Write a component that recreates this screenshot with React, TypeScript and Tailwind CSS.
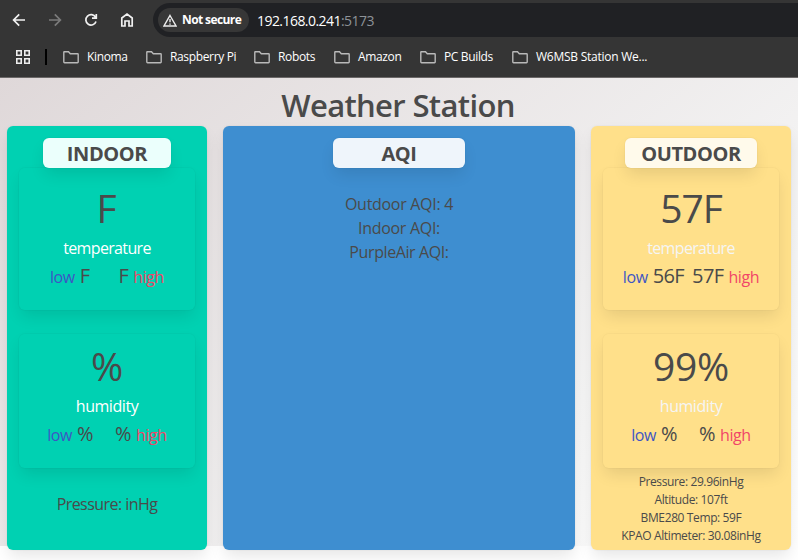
import type { ReactNode } from 'react';

const boxShadow = 'shadow-[0_8px_16px_-2px_rgba(10,10,10,0.1),0_0_0_1px_rgba(10,10,10,0.02)]';

function Folder() {
  return (
    <svg width="16" height="13" viewBox="0 0 16 13" fill="none" stroke="#b9b9b9" strokeWidth="1.4" className="shrink-0">
      <path d="M.8 10.8V1.2Q.8.8 1.2.8H5.5L7.3 2.8H14.6Q15.2 2.8 15.2 3.4V11Q15.2 11.7 14.5 11.7H1.5Q.8 11.7.8 10.8Z" />
    </svg>
  );
}

function Bookmark({ label, box, text }: { label: string; box: string; text: string }) {
  return (
    <div className={`flex items-center gap-2 whitespace-nowrap ${box}`}>
      <Folder />
      <span className={`text-[12px] leading-4 text-white ${text}`}>{label}</span>
    </div>
  );
}

function Browser() {
  return (
    <header className="h-[78px] border-b border-[#6b6868] bg-[#353535]">
      <div className="flex h-10 items-center">
        <svg width="153" height="34" viewBox="0 3 153 34" fill="none" stroke="#f1f1f1" strokeWidth="1.7">
          <path d="M25 20H14M19.2 14.3L13.6 20L19.2 25.7" />
          <path stroke="#7b7b7b" d="M49 20H60M54.8 14.3L60.4 20L54.8 25.7" />
          <path d="M95.6 17.3A5.2 5.2 0 1 0 96 21.5M96.3 14V18.2H92" />
          <path d="M121.8 26V18L127 14L132.2 18V26H129V21H125V26Z" />
        </svg>
        <div className="flex h-[34px] flex-1 items-center rounded-l-full bg-[#202124] pl-[5px]">
          <div className="flex h-6 w-[91px] items-center gap-[5px] rounded-full bg-[#373737] pl-[5px]">
            <svg width="14" height="13" viewBox="0 0 14 13" fill="none" stroke="#ededed" strokeWidth="1.4">
              <path d="M7 1.5L13 12H1Z" />
              <path d="M7 5V8.3M7 9.4V10.7" />
            </svg>
            <span className="whitespace-nowrap text-[12px] font-bold tracking-[-0.6px] text-white">Not secure</span>
          </div>
          <span className="ml-2 text-[14px] tracking-[-0.55px] text-white">
            192.168.0.241<span className="text-[#8d9297]">:5173</span>
          </span>
        </div>
      </div>
      <div className="flex h-[34px] items-center pl-4">
        <svg width="14" height="14" viewBox="0 0 14 14" fill="none" stroke="#ededed" strokeWidth="1.6">
          <path d="M.8.8H5.2V5.2H.8ZM8.8.8H13.2V5.2H8.8ZM.8 8.8H5.2V13.2H.8ZM8.8 8.8H13.2V13.2H8.8Z" />
        </svg>
        <i className="ml-[15px] h-4 w-[2px] bg-black" />
        <div className="ml-4 flex">
          <Bookmark label="Kinoma" box="w-[83px]" text="tracking-[-0.35px]" />
          <Bookmark label="Raspberry Pi" box="w-[108px]" text="tracking-[-0.35px]" />
          <Bookmark label="Robots" box="w-[80px]" text="tracking-[-0.35px]" />
          <Bookmark label="Amazon" box="w-[86px]" text="tracking-[-0.35px]" />
          <Bookmark label="PC Builds" box="w-[92px]" text="tracking-[-0.35px]" />
          <Bookmark label="W6MSB Station We..." box="w-[140px]" text="tracking-[-0.25px]" />
        </div>
      </div>
    </header>
  );
}

function Badge({ children, className }: { children: ReactNode; className: string }) {
  return (
    <h2 className={`relative z-10 mx-auto flex h-[30px] items-center justify-center rounded-[6px] pt-px text-[20px] font-bold leading-none ${boxShadow} ${className}`}>
      {children}
    </h2>
  );
}

type ReadingProps = { value: string; valueText: string; label: string; low: string; high: string; gap: string; className: string; labelText: string };

function Reading({ value, valueText, label, low, high, gap, className, labelText }: ReadingProps) {
  return (
    <div className={`flex flex-col items-center whitespace-nowrap rounded-[6px] ${boxShadow} ${className}`}>
      <div className={`h-[54px] text-[39px] font-normal leading-[52px] ${valueText}`}>{value}</div>
      <div className={`h-6 text-[16px] leading-6 ${labelText}`}>{label}</div>
      <div className={`flex h-8 items-baseline leading-8 ${gap}`}>
        <span className="text-[16px] tracking-[-0.4px]">
          <span className="mr-[5px] text-[#3e56c4]">low</span>
          <span className="text-[20px] tracking-[-0.6px]">{low}</span>
        </span>
        <span className="text-[16px] tracking-[-0.4px]">
          <span className="mr-[5px] text-[20px] tracking-[-0.6px]">{high}</span>
          <span className="text-[#f14668]">high</span>
        </span>
      </div>
    </div>
  );
}

export default function App() {
  return (
    <div className="h-[560px] w-[798px] overflow-hidden bg-white font-['Open_Sans','Noto_Sans',sans-serif] text-[#4a4a4a]">
      <Browser />
      <main className="h-[468px] bg-[linear-gradient(141deg,#dfd8d9_0%,whitesmoke_71%,white_100%)] pl-[7px]">
        <h1 className="flex h-12 w-[782px] items-center justify-center pt-[7px] text-[31px] font-semibold tracking-[-0.65px]">Weather Station</h1>
        <div className="flex gap-4">
          <section className={`h-[424px] w-[200px] rounded-[6px] bg-[#00d1b2] px-3 pt-3 ${boxShadow}`}>
            <Badge className="w-32 bg-[#ebfffc] tracking-[-0.4px]">INDOOR</Badge>
            <Reading value="F" valueText="pr-px" label="temperature" low="F" high="F" gap="gap-[29px]" className="h-[142px] pt-[14px]" labelText="tracking-[-0.65px] text-white" />
            <Reading value="%" valueText="" label="humidity" low="%" high="%" gap="gap-[22px]" className="mt-6 h-[134px] pt-[6px]" labelText="tracking-[-0.45px] text-white" />
            <p className="mt-6 text-center text-[16px] leading-6 tracking-[-0.55px]">Pressure: inHg</p>
          </section>
          <section className={`h-[424px] w-[352px] rounded-[6px] bg-[#3e8ed0] pt-3 ${boxShadow}`}>
            <Badge className="w-[132px] bg-[#eff5fb] tracking-[-0.4px]">AQI</Badge>
            <div className="mt-6 text-center text-[16px] leading-6">
              <p className="tracking-[-0.3px]">Outdoor AQI: 4</p>
              <p className="tracking-[-0.3px]">Indoor AQI:</p>
              <p className="tracking-[-0.4px]">PurpleAir AQI:</p>
            </div>
          </section>
          <section className={`h-[424px] w-[200px] rounded-[6px] bg-[#ffe08a] px-3 pt-3 ${boxShadow}`}>
            <Badge className="w-[132px] bg-[#fffaeb] tracking-[-0.45px]">OUTDOOR</Badge>
            <Reading value="57F" valueText="tracking-[-1.1px]" label="temperature" low="56F" high="57F" gap="gap-[8px]" className="h-[142px] pt-[14px]" labelText="tracking-[-0.65px] text-[#f5f5f5]" />
            <Reading value="99%" valueText="tracking-[-0.3px]" label="humidity" low="%" high="%" gap="gap-[22px]" className="mt-6 h-[134px] pt-[6px]" labelText="tracking-[-0.45px] text-[#f5f5f5]" />
            <div className="mt-[5px] text-center text-[12px] leading-[18px] tracking-[-0.38px]">
              <p>Pressure: 29.96inHg</p>
              <p>Altitude: 107ft</p>
              <p>BME280 Temp: 59F</p>
              <p>KPAO Altimeter: 30.08inHg</p>
            </div>
          </section>
        </div>
      </main>
    </div>
  );
}
